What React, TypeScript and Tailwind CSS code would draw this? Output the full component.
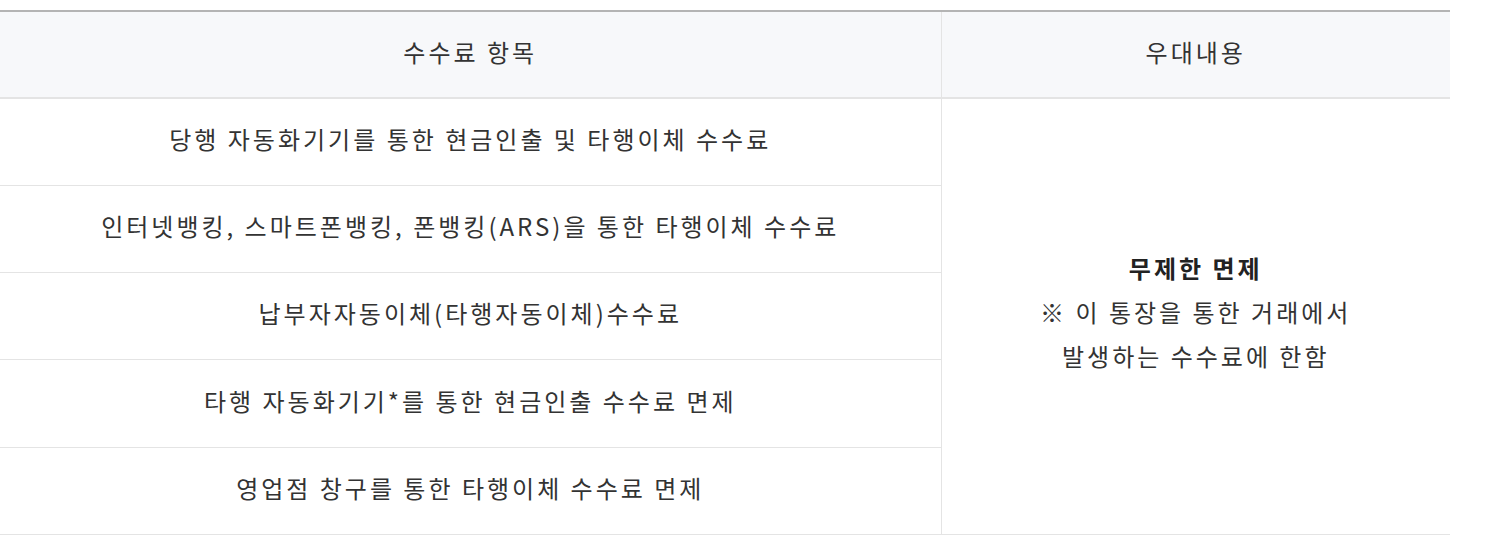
const rows = [
  '당행 자동화기기를 통한 현금인출 및 타행이체 수수료',
  '인터넷뱅킹, 스마트폰뱅킹, 폰뱅킹(ARS)을 통한 타행이체 수수료',
  '납부자자동이체(타행자동이체)수수료',
  '타행 자동화기기*를 통한 현금인출 수수료 면제',
  '영업점 창구를 통한 타행이체 수수료 면제',
]

export default function App() {
  return (
    <div className="bg-white pt-[10px] text-[#333] text-[24px] tracking-[3px] font-['Noto_Sans_CJK_KR','Noto_Sans',sans-serif]">
      <table className="w-[1450px] table-fixed border-collapse border-t-2 border-t-[#b4b4b4]">
        <colgroup>
          <col className="w-[941px]" />
          <col />
        </colgroup>
        <thead>
          <tr className="h-[87px] bg-[#f7f8fa]">
            <th className="border-b-2 border-r border-[#e4e4e4] font-normal pb-[6px]">수수료 항목</th>
            <th className="border-b-2 border-[#e4e4e4] font-normal pb-[6px]">우대내용</th>
          </tr>
        </thead>
        <tbody>
          {rows.map((text, i) => (
            <tr key={i} className="h-[87.3px]">
              <td className="border-b border-r border-[#e4e4e4] text-center pb-[6px]">{text}</td>
              {i === 0 && (
                <td rowSpan={5} className="border-b border-[#e4e4e4] text-center leading-[44px] pb-[8px]">
                  <div className="font-bold text-[#222]">무제한 면제</div>
                  <div>※ 이 통장을 통한 거래에서</div>
                  <div>발생하는 수수료에 한함</div>
                </td>
              )}
            </tr>
          ))}
        </tbody>
      </table>
    </div>
  )
}
